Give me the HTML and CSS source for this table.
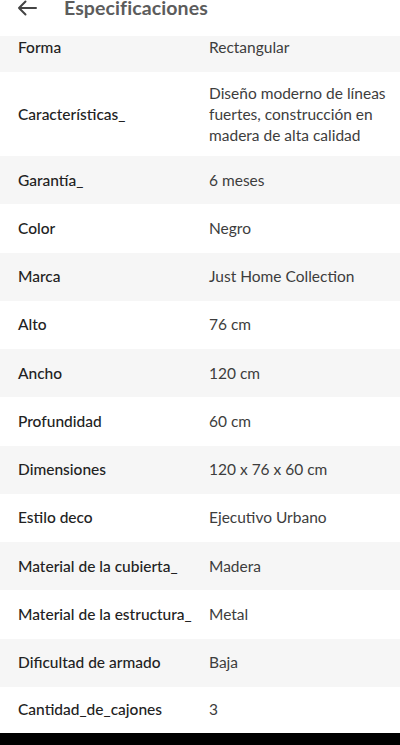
FILE: index.html
```html
<!DOCTYPE html>
<html lang="es">
<head>
<meta charset="utf-8">
<link rel="stylesheet" href="styles.css">
</head>
<body>
<div class="screen">
  <header class="topbar">
    <svg class="back" width="20" height="16" viewBox="0 0 20 16"><path d="M19 8H2M8.5 1.5L2 8l6.5 6.5" fill="none" stroke="#444" stroke-width="2" stroke-linecap="round" stroke-linejoin="round"/></svg>
    <h1 class="title">Especificaciones</h1>
  </header>
  <div class="list">
    <div class="row alt first"><div class="label">Forma</div><div class="value">Rectangular</div></div>
    <div class="row multi"><div class="label">Características_</div><div class="value">Diseño moderno de líneas fuertes, construcción en madera de alta calidad</div></div>
    <div class="row alt"><div class="label">Garantía_</div><div class="value">6 meses</div></div>
    <div class="row"><div class="label">Color</div><div class="value">Negro</div></div>
    <div class="row alt"><div class="label">Marca</div><div class="value">Just Home Collection</div></div>
    <div class="row"><div class="label">Alto</div><div class="value">76 cm</div></div>
    <div class="row alt"><div class="label">Ancho</div><div class="value">120 cm</div></div>
    <div class="row"><div class="label">Profundidad</div><div class="value">60 cm</div></div>
    <div class="row alt"><div class="label">Dimensiones</div><div class="value">120 x 76 x 60 cm</div></div>
    <div class="row"><div class="label">Estilo deco</div><div class="value">Ejecutivo Urbano</div></div>
    <div class="row alt"><div class="label">Material de la cubierta_</div><div class="value">Madera</div></div>
    <div class="row"><div class="label">Material de la estructura_</div><div class="value">Metal</div></div>
    <div class="row alt"><div class="label">Dificultad de armado</div><div class="value">Baja</div></div>
    <div class="row last"><div class="label">Cantidad_de_cajones</div><div class="value">3</div></div>
  </div>
  <div class="navbar"></div>
</div>
</body>
</html>
```
FILE: styles.css
```css
* { box-sizing: border-box; }
html, body { margin: 0; padding: 0; background: #fff; }
body { font-family: Lato, "Noto Sans", sans-serif; color: #222; }
.screen { width: 400px; height: 745px; display: flex; flex-direction: column; overflow: hidden; }
.topbar { height: 36px; flex: none; display: flex; align-items: flex-start; padding: 0 0 0 17px; gap: 27px; background: #fff; }
.back { margin-top: 0; }
.title { margin: -4px 0 0 0; font-size: 19.5px; font-weight: 700; color: #5c5c5c; line-height: 24px; letter-spacing: 0.1px; }
.list { flex: 1; display: flex; flex-direction: column; }
.row { display: flex; align-items: center; min-height: 48.25px; padding: 10.5px 0 10.5px 18px; font-size: 15.5px; line-height: 21px; }
.row.alt { background: #f6f6f6; }
.row.first { min-height: 36px; height: 36px; align-items: flex-start; padding-top: 1px; }
.row.last { min-height: 46px; height: 46px; }
.label { width: 191px; flex: none; font-weight: 500; color: #222; }
.value { flex: 1; color: #3d3d3d; padding-right: 10px; }
.navbar { height: 14px; flex: none; background: #000; }
```
